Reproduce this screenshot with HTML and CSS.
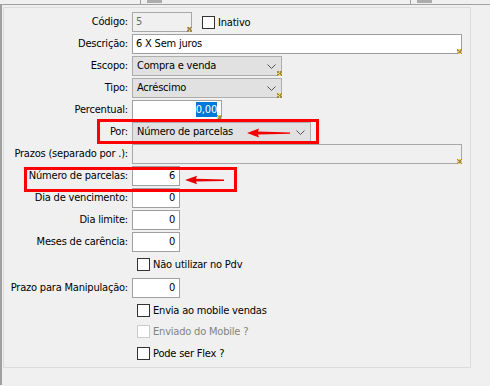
FILE: index.html
```html
<!DOCTYPE html>
<html lang="pt-BR">
  <head>
    <meta charset="UTF-8" />
    <title>Condição de pagamento</title>
    <link rel="stylesheet" href="styles.css">
  </head>
  <body>
    <div class="tabs">
      <span class="tab tab-a"></span>
      <span class="tab tab-b"></span>
    </div>
    <div class="frame">
      <div class="group">
        <div class="row">
          <span class="lbl">Código:</span>
          <div class="field off w60"><span class="val">5</span><i class="mark"></i></div>
          <label class="chk inativo"><span class="box"></span>Inativo</label>
        </div>
        <div class="row">
          <span class="lbl">Descrição:</span>
          <div class="field w330"><span class="val">6 X Sem juros</span><i class="mark"></i></div>
        </div>
        <div class="row">
          <span class="lbl">Escopo:</span>
          <div class="field combo w150"><span class="val">Compra e venda</span><svg class="caret" width="9" height="5" viewBox="0 0 9 5"><polyline points="0.5,0.5 4.5,4.5 8.5,0.5" fill="none" stroke="#555" stroke-width="1"/></svg><i class="mark"></i></div>
        </div>
        <div class="row">
          <span class="lbl">Tipo:</span>
          <div class="field combo w150"><span class="val">Acréscimo</span><svg class="caret" width="9" height="5" viewBox="0 0 9 5"><polyline points="0.5,0.5 4.5,4.5 8.5,0.5" fill="none" stroke="#555" stroke-width="1"/></svg><i class="mark"></i></div>
        </div>
        <div class="row">
          <span class="lbl">Percentual:</span>
          <div class="field num w90"><span class="val sel">0,00</span><i class="mark"></i></div>
        </div>
        <div class="row">
          <span class="lbl">Por:</span>
          <div class="field combo w179"><span class="val">Número de parcelas</span><svg class="caret" width="9" height="5" viewBox="0 0 9 5"><polyline points="0.5,0.5 4.5,4.5 8.5,0.5" fill="none" stroke="#555" stroke-width="1"/></svg></div>
        </div>
        <div class="row">
          <span class="lbl">Prazos (separado por .):</span>
          <div class="field off w330"><span class="val"></span><i class="mark"></i></div>
        </div>
        <div class="row">
          <span class="lbl">Número de parcelas:</span>
          <div class="field num w48"><span class="val">6</span></div>
        </div>
        <div class="row">
          <span class="lbl">Dia de vencimento:</span>
          <div class="field num w48"><span class="val">0</span></div>
        </div>
        <div class="row">
          <span class="lbl">Dia limite:</span>
          <div class="field num w48"><span class="val">0</span></div>
        </div>
        <div class="row">
          <span class="lbl">Meses de carência:</span>
          <div class="field num w48"><span class="val">0</span></div>
        </div>
        <div class="row r24">
          <span class="lbl"></span>
          <label class="chk"><span class="box"></span>Não utilizar no Pdv</label>
        </div>
        <div class="row">
          <span class="lbl">Prazo para Manipulação:</span>
          <div class="field num w48"><span class="val">0</span></div>
        </div>
        <div class="row r21">
          <span class="lbl"></span>
          <label class="chk"><span class="box"></span>Envia ao mobile vendas</label>
        </div>
        <div class="row">
          <span class="lbl"></span>
          <label class="chk dim"><span class="box"></span>Enviado do Mobile ?</label>
        </div>
        <div class="row">
          <span class="lbl"></span>
          <label class="chk"><span class="box"></span>Pode ser Flex ?</label>
        </div>

        <!-- marcações em vermelho do print -->
        <div class="hl hl-por"></div>
        <div class="hl hl-parc"></div>
        <svg class="arrow arrow-por" width="44" height="10" viewBox="0 0 44 10">
          <path d="M0 5 L12 0.5 L11 3.6 L43 4.6 L43 5.8 L11 6.6 L12 9.5 Z" fill="#f20000"/>
        </svg>
        <svg class="arrow arrow-parc" width="40" height="10" viewBox="0 0 40 10">
          <path d="M0 5 L12 0.8 L11 3.8 L39 4.4 L39 5.9 L11 6.4 L12 9.2 Z" fill="#e80000"/>
        </svg>
      </div>
    </div>
  </body>
</html>
```

FILE: styles.css
```css
html,
body {
  margin: 0;
  background: #f0f0f0;
}
body {
  width: 490px;
  height: 386px;
  overflow: hidden;
  font-family: Tahoma, "DejaVu Sans Condensed", "Liberation Sans", sans-serif;
  font-size: 11px;
  letter-spacing: -0.2px;
  color: #000;
}
.tabs {
  height: 4px;
  position: relative;
}
.tab {
  position: absolute;
  top: 0;
  height: 4px;
  border-left: 1px solid #a0a0a0;
}
.tab::after {
  content: "";
  position: absolute;
  left: 6px;
  top: 0;
  width: 15px;
  height: 3px;
  background: #acacac;
}
.tab-a {
  left: 140px;
}
.tab-b {
  left: 410px;
}
.frame {
  border-top: 1px solid #a0a0a0;
  border-left: 2px solid #a0a0a0;
  height: 381px;
  box-sizing: border-box;
  padding: 2px 0 0 1px;
}
.group {
  position: relative;
  width: 468px;
  height: 361px;
  box-sizing: border-box;
  border: 1px solid #dcdcdc;
  padding-top: 4px;
}
.row {
  display: flex;
  align-items: flex-start;
  height: 22px;
}
.row.r24 {
  height: 24px;
}
.row.r21 {
  height: 21px;
}
.lbl {
  width: 124px;
  margin-right: 4px;
  text-align: right;
  line-height: 20px;
  white-space: nowrap;
}
.field {
  position: relative;
  height: 20px;
  box-sizing: border-box;
  border: 1px solid #a0a0a0;
  background: #fff;
  line-height: 18px;
  padding: 0 3px;
  white-space: nowrap;
}
.field.off {
  background: #f0f0f0;
  border-color: #a8a8a8;
  color: #6d6d6d;
}
.field.combo {
  background: #e1e1e1;
  border-color: #adadad;
  padding-left: 4px;
}
.field.num {
  text-align: right;
  padding-right: 4px;
}
.w48 { width: 48px; }
.w60 { width: 60px; }
.w90 { width: 90px; }
.w150 { width: 150px; }
.w179 { width: 179px; }
.w330 { width: 330px; }
.sel {
  background: #0078d7;
  color: #fff;
  padding: 1px 0;
}
.caret {
  position: absolute;
  right: 5px;
  top: 7px;
}
.mark {
  position: absolute;
  right: -1px;
  bottom: -1px;
  width: 5px;
  height: 5px;
  background:
    linear-gradient(45deg, transparent 40%, #9a8a50 40%, #9a8a50 60%, transparent 60%),
    linear-gradient(-45deg, transparent 40%, #9a8a50 40%, #9a8a50 60%, transparent 60%),
    #f2d34a;
}
.chk {
  display: flex;
  align-items: center;
  height: 20px;
  margin-left: 5px;
  white-space: nowrap;
}
.chk.inativo {
  margin-left: 10px;
}
.box {
  width: 13px;
  height: 13px;
  box-sizing: border-box;
  border: 1px solid #333;
  background: #fff;
  margin-right: 3px;
}
.chk.dim {
  color: #838383;
}
.chk.dim .box {
  border-color: #cccccc;
}
.hl {
  position: absolute;
  border: 3px solid #f00;
  box-sizing: border-box;
}
.hl-por {
  left: 93px;
  top: 111px;
  width: 222px;
  height: 25px;
}
.hl-parc {
  left: 20px;
  top: 159px;
  width: 213px;
  height: 25px;
}
.arrow {
  position: absolute;
}
.arrow-por {
  left: 243px;
  top: 120px;
}
.arrow-parc {
  left: 181px;
  top: 167px;
}
```
